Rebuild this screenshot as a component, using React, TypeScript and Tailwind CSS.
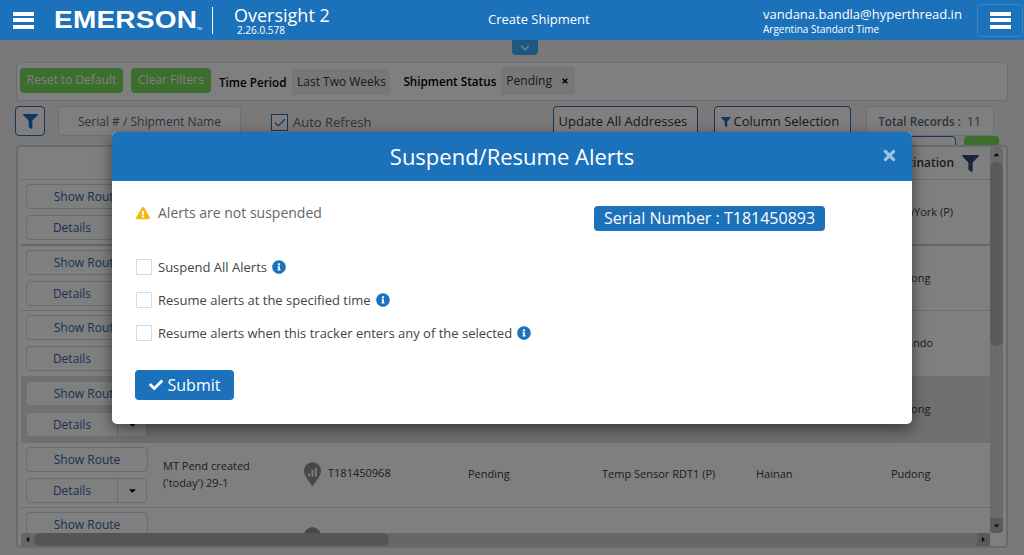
import { Check, ChevronDown } from "lucide-react";
import { FaCaretDown, FaCaretLeft, FaCaretRight, FaCaretUp, FaCheck, FaExclamationTriangle, FaFilter, FaInfoCircle, FaTimes } from "react-icons/fa";

const rows = [
  { destination: "NewYork (P)", height: "h-[66px]", border: "border-b-2 border-[#c8ccd4]", cellTop: "pt-[20px]" },
  { destination: "Pudong", height: "h-[65px]", border: "border-b border-[#d8dbe0]", cellTop: "pt-[20px]" },
  { destination: "Orlando", height: "h-[65px]", border: "", cellTop: "pt-[20px]" },
  { destination: "Pudong", height: "h-[67px]", border: "", cellTop: "pt-[20px]", selected: true },
  {
    destination: "Pudong",
    height: "h-[65px]",
    border: "border-b border-[#d8dbe0]",
    cellTop: "pt-[19px]",
    name: ["MT Pend created", "('today') 29-1"],
    serial: "T181450968",
    status: "Pending",
    asset: "Temp Sensor RDT1 (P)",
    origin: "Hainan",
  },
];

function Pin({ className }: { className?: string }) {
  return (
    <svg viewBox="0 0 18 26" className={className}>
      <path d="M9 0C4 0 0 4 0 9c0 6 6 11 9 17 3-6 9-11 9-17 0-5-4-9-9-9z" fill="#909090" />
      <path d="M4.5 15v-3h2v3zM8 15V7l2 2v6zM11.5 15V6h2v9z" fill="#ffffff" />
    </svg>
  );
}

function RowButtons({ selected }: { selected?: boolean }) {
  const tone = selected ? "border-transparent bg-clip-padding" : "border-[#d3d7e2]";
  return (
    <div className="w-[142px] shrink-0 pl-[5px] flex flex-col gap-[6px]">
      <div className={`w-[122px] h-[25px] rounded border bg-white ${tone} text-[12px] text-[#34659b] flex items-center justify-center`}>
        Show Route
      </div>
      <div className={`w-[121px] h-[25px] rounded border bg-white ${tone} text-[12px] text-[#3a5ca8] flex`}>
        <span className="flex-1 flex items-center justify-center">Details</span>
        <span className="w-[29px] border-l border-[#d3d7e2] flex items-center justify-center text-black">
          <FaCaretDown className="text-[11px]" />
        </span>
      </div>
    </div>
  );
}

function Row({ row }: { row: (typeof rows)[number] }) {
  return (
    <div className={`${row.height} ${row.border} ${row.selected ? "bg-[#e0e0e0] pt-[5px]" : "pt-[4px]"} shrink-0 flex text-[11px] text-[#333b4a]`}>
      <RowButtons selected={row.selected} />
      <div className="w-[141px] shrink-0 pt-[10px] leading-[17px]">
        {row.name?.map((line) => (
          <div key={line}>{line}</div>
        ))}
      </div>
      <div className="w-[164px] shrink-0 pt-[15px]">
        {row.serial && (
          <div className="flex items-start gap-[7px]">
            <Pin className="w-[17px] h-[25px]" />
            <span className="mt-[3px]">{row.serial}</span>
          </div>
        )}
      </div>
      <div className={`w-[134px] shrink-0 ${row.cellTop}`}>{row.status}</div>
      <div className={`w-[154px] shrink-0 ${row.cellTop}`}>{row.asset}</div>
      <div className={`w-[135px] shrink-0 ${row.cellTop}`}>{row.origin}</div>
      <div className={row.cellTop}>{row.destination}</div>
    </div>
  );
}

function Bars({ className }: { className?: string }) {
  return (
    <div className={`flex flex-col justify-between ${className}`}>
      <span className="h-[4px] bg-white" />
      <span className="h-[4px] bg-white" />
      <span className="h-[4px] bg-white" />
    </div>
  );
}

function AlertOption({ label }: { label: string }) {
  return (
    <div className="flex items-center h-[16px]">
      <span className="w-[16px] h-[16px] border border-[#d4d8e2] rounded-[1px] bg-white" />
      <span className="ml-[6px] pt-[2px] text-[13px] text-[#444]">{label}</span>
      <FaInfoCircle className="ml-[5px] text-[14px] text-[#1c71bb]" />
    </div>
  );
}

export default function App() {
  return (
    <div className="relative h-[555px] w-[1024px] overflow-hidden bg-[#f2f2f2] font-['Open_Sans',sans-serif]">
      {/* Header stays above the backdrop */}
      <header className="relative z-20 h-[40px] bg-[#1c71bb] text-white flex items-center">
        <Bars className="w-[21px] h-[17px] ml-[13px]" />
        <div className="ml-[20px] mt-[1px] flex items-start w-[158px]">
          <span className="origin-left scale-x-[1.19] font-['Liberation_Sans',sans-serif] font-bold text-[23.5px] leading-none tracking-[0.2px]">EMERSON</span>
          <span className="ml-[22px] text-[4px] mt-[17px]">TM</span>
        </div>
        <span className="w-px h-[27px] bg-white" />
        <div className="ml-[21px] w-[254px] -mt-[1px]">
          <div className="text-[18px] leading-[20px]">Oversight 2</div>
          <div className="ml-[3px] text-[10px] leading-[10px]">2.26.0.578</div>
        </div>
        <span className="text-[13px] w-[275px]">Create Shipment</span>
        <div className="w-[214px] mt-[1px]">
          <div className="text-[13px] leading-[17px]">vandana.bandla@hyperthread.in</div>
          <div className="text-[10px] leading-[12px]">Argentina Standard Time</div>
        </div>
        <div className="w-[46px] h-[33px] border border-[#3a84c6] rounded flex items-center justify-center">
          <Bars className="w-[21px] h-[17px]" />
        </div>
      </header>

      <div className="flex justify-center">
        <div className="ml-[26px] w-[26px] h-[15px] bg-[#38b0ff] rounded-b flex items-center justify-center text-white">
          <ChevronDown size={14} strokeWidth={2.5} />
        </div>
      </div>

      {/* Filter summary */}
      <div className="mx-[16px] mt-[7px] h-[39px] bg-white border border-[#dcdce4] rounded flex items-center pl-[3px] text-[12px]">
        <span className="w-[103px] h-[25px] -mt-[3px] rounded bg-[#78dc5a] text-white flex items-center justify-center">Reset to Default</span>
        <span className="ml-[8px] w-[80px] h-[25px] -mt-[3px] rounded bg-[#78dc5a] text-white flex items-center justify-center">Clear Filters</span>
        <span className="ml-[8px] mt-[3px] font-semibold text-[11.7px] text-black">Time Period</span>
        <span className="ml-[6px] w-[98px] h-[26px] bg-[#efefef] text-[#333] flex items-center justify-center">Last Two Weeks</span>
        <span className="ml-[13px] mt-[1px] font-semibold text-[11.7px] text-black">Shipment Status</span>
        <span className="ml-[5px] w-[74px] h-[28px] -mt-[1px] bg-[#efefef] text-[#333] flex items-center pl-[5px]">
          Pending
          <FaTimes className="ml-[9px] text-[8px] text-black" />
        </span>
      </div>

      {/* Toolbar */}
      <div className="ml-[15px] mt-[5px] h-[30px] flex items-start text-[12px]">
        <span className="w-[30px] h-[30px] border border-[#2a6fb0] rounded bg-white flex items-center justify-center text-[#1c71bb]">
          <FaFilter className="text-[15px]" />
        </span>
        <span className="ml-[13px] w-[183px] h-[30px] pt-[1px] border border-[#dcdce4] rounded bg-white text-[#5a6a80] flex items-center justify-center">
          Serial # / Shipment Name
        </span>
        <span className="ml-[30px] mt-[8px] w-[17px] h-[17px] border border-[#2a6fb0] bg-white flex items-center justify-center text-[#1c71bb]">
          <Check size={14} strokeWidth={2} />
        </span>
        <span className="ml-[5px] mt-[7px] text-[#666] text-[13px]">Auto Refresh</span>
        <span className="ml-[181px] w-[145px] h-[30px] pt-[1px] pl-[5px] border border-[#2a6fb0] rounded bg-white text-[#333] flex items-center text-[13px]">
          Update All Addresses
        </span>
        <span className="ml-[16px] w-[137px] h-[30px] pt-[1px] border border-[#2a6fb0] rounded bg-white text-[#333] flex items-center pl-[6px] gap-[3px] text-[13px]">
          <FaFilter className="text-[10px] text-[#1c71bb]" />
          Column Selection
        </span>
        <span className="ml-[15px] w-[128px] h-[30px] pt-[1px] border border-[#dcdce4] rounded bg-white text-[#5a6a80] flex items-center justify-center gap-[6px]">
          <span className="font-semibold text-[11.7px]">Total Records :</span> 11
        </span>
      </div>

      {/* Tops of the table action buttons, cut off by the table */}
      <div className="h-[9px] pr-[25px] flex justify-end items-start gap-[8px] overflow-hidden">
        <span className="w-[100px] h-[20px] border border-[#2a6fb0] rounded bg-white" />
        <span className="w-[35px] h-[20px] rounded bg-[#78dc5a]" />
      </div>

      {/* Shipments table */}
      <div className="relative ml-[16px] w-[992px] h-[403px] border-2 border-[#d4d4d8] rounded bg-white flex flex-col overflow-hidden">
        <div className="flex-1 min-h-0 flex pl-[3px]">
          <div className="w-[969px] shrink-0 flex flex-col overflow-hidden">
            <div className="h-[33px] shrink-0 border-b border-[#d8dbe0] flex items-center justify-end pr-[11px] gap-[8px] text-[12px] font-semibold text-[#333b4a]">
              Destination
              <FaFilter className="text-[17px] text-[#2c4a78]" />
            </div>
            {rows.map((row, i) => (
              <Row key={i} row={row} />
            ))}
            <div className="shrink-0 flex pt-[4px]">
              <div className="w-[142px] shrink-0 pl-[5px]">
                <div className="w-[122px] h-[25px] rounded border border-[#d3d7e2] bg-white text-[12px] text-[#34659b] flex items-center justify-center">
                  Show Route
                </div>
              </div>
              <div className="ml-[141px] pt-[15px]">
                <Pin className="w-[17px] h-[25px]" />
              </div>
            </div>
          </div>
          <div className="w-[13px] shrink-0 bg-[#d6d6d6] rounded flex flex-col text-[#222]">
            <span className="h-[15px] flex items-center justify-center"><FaCaretUp className="text-[9px]" /></span>
            <span className="h-[184px] bg-[#b4b4b4] rounded-full" />
            <span className="flex-1" />
            <span className="h-[15px] bg-[#b4b4b4] rounded-b flex items-center justify-center"><FaCaretDown className="text-[9px]" /></span>
          </div>
        </div>
        <div className="h-[13px] shrink-0 ml-[3px] w-[969px] bg-[#cecece] flex items-center text-[#222]">
          <span className="w-[13px] flex justify-center"><FaCaretLeft className="text-[9px]" /></span>
          <span className="w-[355px] h-[13px] bg-[#aaaaaa] rounded-full" />
          <span className="flex-1" />
          <span className="w-[13px] h-[13px] bg-[#b4b4b4] flex items-center justify-center"><FaCaretRight className="text-[9px]" /></span>
        </div>
      </div>

      {/* Modal backdrop */}
      <div className="absolute inset-0 z-10 bg-black/50" />

      {/* Suspend/Resume dialog */}
      <div className="absolute left-[112px] top-[132px] z-30 w-[800px] h-[292px] bg-white rounded-[5px] overflow-hidden shadow-[0_5px_15px_rgba(0,0,0,0.5)]">
        <div className="relative h-[49px] bg-[#1c71bb] text-white flex items-center justify-center text-[22px]">
          Suspend/Resume Alerts
          <FaTimes className="absolute right-[14px] top-[15px] text-[17px] text-[#9cc4e6]" />
        </div>
        <div className="pl-[24px] pt-[25px]">
          <div className="flex items-start h-[25px]">
            <FaExclamationTriangle className="text-[14px] text-[#f5b90f]" />
            <span className="ml-[8px] w-[436px] text-[14px] leading-[14px] text-[#666]">Alerts are not suspended</span>
            <span className="h-[25px] pb-[1px] px-[10px] rounded bg-[#1c71bb] text-white text-[16px] flex items-center">Serial Number : T181450893</span>
          </div>
          <div className="mt-[28px] flex flex-col gap-[17px]">
            <AlertOption label="Suspend All Alerts" />
            <AlertOption label="Resume alerts at the specified time" />
            <AlertOption label="Resume alerts when this tracker enters any of the selected" />
          </div>
          <div className="-ml-[1px] mt-[29px] w-[99px] h-[30px] rounded bg-[#1c71bb] text-white text-[16px] flex items-center justify-center gap-[5px]">
            <FaCheck className="text-[14px]" />
            Submit
          </div>
        </div>
      </div>
    </div>
  );
}
